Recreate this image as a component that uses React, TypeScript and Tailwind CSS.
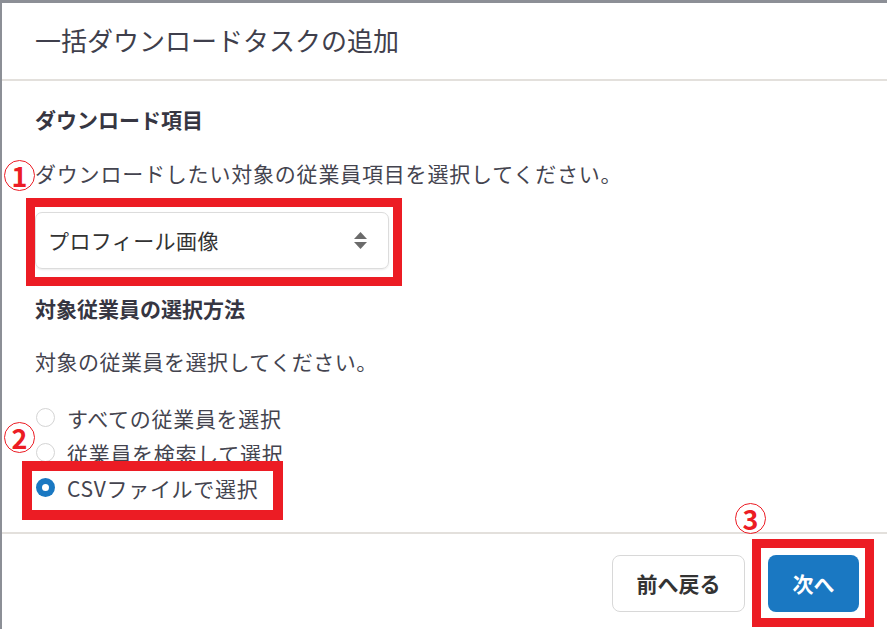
const FONT = { fontFamily: '"Noto Sans CJK JP", "Noto Sans", sans-serif' }

function Marker({ n, className }: { n: string; className: string }) {
  return (
    <div
      className={`absolute w-[31px] h-[31px] rounded-full border-[1.5px] border-[#ec1c24] flex items-center justify-center text-[27px] font-bold leading-none text-[#ec1c24] ${className}`}
    >
      <span className="-mt-[1px]">{n}</span>
    </div>
  )
}

function Radio({ label, checked }: { label: string; checked?: boolean }) {
  return (
    <label className="h-[35px] flex items-center gap-[12px] pl-[1px]">
      {checked ? (
        <span className="w-[19px] h-[19px] rounded-full bg-[#1a78c2] flex items-center justify-center">
          <span className="w-[7px] h-[7px] rounded-full bg-white" />
        </span>
      ) : (
        <span className="w-[19px] h-[19px] rounded-full border border-[#d4d4d4] bg-white" />
      )}
      <span className="text-[21px] leading-[30px] tracking-[0.7px] text-[#44444f]">{label}</span>
    </label>
  )
}

export default function App() {
  return (
    <div className="relative w-[887px] h-[629px] overflow-hidden bg-[#8c8f96] pl-[2px] pt-[3px]" style={FONT}>
      <div className="h-full bg-white flex flex-col">
        {/* Header */}
        <div className="h-[78px] shrink-0 px-[33px] flex items-center border-b-2 border-[#e3e0dc]">
          <h1 className="text-[26px] leading-none text-[#3f3f4c] -mt-[2px]">一括ダウンロードタスクの追加</h1>
        </div>

        {/* Body */}
        <div className="flex-1 pl-[33px] pt-[23px]">
          <h2 className="text-[21px] leading-[30px] font-bold text-[#363642]">ダウンロード項目</h2>
          <p className="mt-[24px] text-[21px] leading-[30px] tracking-[0.8px] text-[#44444f]">
            ダウンロードしたい対象の従業員項目を選択してください。
          </p>
          <div className="mt-[24px] w-[354px] h-[57px] rounded-[7px] border border-[#dcdcdc] shadow-[0_1px_2px_rgba(0,0,0,0.08)] flex items-center justify-between pl-[12px] pr-[21px]">
            <span className="text-[21px] tracking-[0.4px] text-[#333]">プロフィール画像</span>
            <svg width="13" height="17" viewBox="0 0 13 17" fill="#6b6b6b">
              <path d="M6.5 0 L13 7 H0 Z" />
              <path d="M0 10 H13 L6.5 17 Z" />
            </svg>
          </div>
          <h2 className="mt-[24px] text-[21px] leading-[30px] font-bold text-[#363642]">対象従業員の選択方法</h2>
          <p className="mt-[23px] text-[21px] leading-[30px] tracking-[0.5px] text-[#44444f]">対象の従業員を選択してください。</p>
          <div className="mt-[24px] flex flex-col">
            <Radio label="すべての従業員を選択" />
            <Radio label="従業員を検索して選択" />
            <Radio label="CSVファイルで選択" checked />
          </div>
        </div>

        {/* Footer */}
        <div className="h-[97px] shrink-0 border-t-2 border-[#e3e0dc] flex justify-end items-start pt-[21px] pr-[28px] gap-[23px]">
          <button className="w-[133px] h-[57px] rounded-[8px] border border-[#d8d8d8] bg-white text-[21px] font-bold text-[#333]">
            前へ戻る
          </button>
          <button className="w-[91px] h-[57px] rounded-[8px] bg-[#1a78c2] text-[21px] font-bold text-white">
            次へ
          </button>
        </div>
      </div>

      {/* Annotations */}
      <div className="absolute left-[26px] top-[198px] w-[376px] h-[88px] border-[9px] border-[#ec1c24]" />
      <div className="absolute left-[22px] top-[461px] w-[261px] h-[59px] border-[10px] border-[#ec1c24]" />
      <div className="absolute left-[752px] top-[539px] w-[122px] h-[88px] border-[9px] border-[#ec1c24]" />
      <Marker n="1" className="left-[4px] top-[160px] bg-white/60" />
      <Marker n="2" className="left-[4px] top-[422px] bg-white/60" />
      <Marker n="3" className="left-[735px] top-[503px] bg-white/60" />
    </div>
  )
}
